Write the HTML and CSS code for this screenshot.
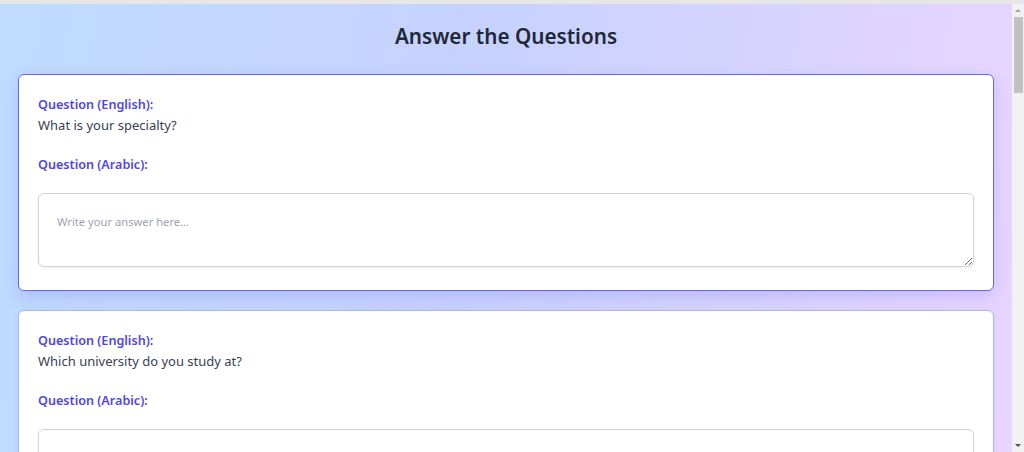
FILE: index.html
```html
<!DOCTYPE html>
<html lang="en">
<head>
    <meta charset="UTF-8" />
    <meta name="viewport" content="width=device-width, initial-scale=1.0" />
    <title>Answer the Questions</title>
    <link rel="stylesheet" href="styles.css">
</head>
<body>
    <div class="topbar"></div>
    <div class="window">
        <div class="page">
            <h1>Answer the Questions</h1>

            <div class="questions">
                <div class="question-card active">
                    <p class="label">Question (English):</p>
                    <p class="text">What is your specialty?</p>
                    <p class="label">Question (Arabic):</p>
                    <p class="text arabic" dir="rtl"></p>
                    <textarea placeholder="Write your answer here..."></textarea>
                </div>

                <div class="question-card">
                    <p class="label">Question (English):</p>
                    <p class="text">Which university do you study at?</p>
                    <p class="label">Question (Arabic):</p>
                    <p class="text arabic" dir="rtl"></p>
                    <textarea placeholder="Write your answer here..."></textarea>
                </div>

                <div class="question-card">
                    <p class="label">Question (English):</p>
                    <p class="text">What year are you in?</p>
                    <p class="label">Question (Arabic):</p>
                    <p class="text arabic" dir="rtl"></p>
                    <textarea placeholder="Write your answer here..."></textarea>
                </div>
            </div>
        </div>

        <div class="scrollbar">
            <div class="arrow up"></div>
            <div class="thumb"></div>
            <div class="track"></div>
            <div class="arrow down"></div>
        </div>
    </div>
</body>
</html>
```

FILE: styles.css
```css
html, body {
    margin: 0;
    height: 100%;
}
body {
    display: flex;
    flex-direction: column;
    overflow: hidden;
    font-family: 'Noto Sans', 'Open Sans', sans-serif;
    background: #fff;
}
.topbar {
    height: 4px;
    flex-shrink: 0;
    background: #e6e6e6;
}
.window {
    flex: 1;
    display: flex;
    min-height: 0;
}
.page {
    flex: 1;
    overflow: hidden;
    background: linear-gradient(100deg, #bfdbfe 0%, #c7d2fe 45%, #e9d5ff 100%);
    padding: 0 18px 40px;
}

/* fake scrollbar */
.scrollbar {
    width: 12px;
    flex-shrink: 0;
    display: flex;
    flex-direction: column;
    align-items: center;
    background: #f1f1f1;
}
.arrow {
    width: 0;
    height: 0;
    border-left: 3px solid transparent;
    border-right: 3px solid transparent;
}
.arrow.up {
    margin: 5px 0 5px;
    border-bottom: 3px solid #a3a3a3;
}
.arrow.down {
    margin: 5px 0 5px;
    border-top: 3px solid #505050;
}
.thumb {
    width: 9px;
    height: 76px;
    background: #c1c1c1;
}
.track {
    flex: 1;
}

h1 {
    margin: 0;
    padding: 16px 0 22px;
    font-size: 20.7px;
    font-weight: 600;
    line-height: 32px;
    color: #1f2937;
    text-align: center;
}
.questions {
    display: flex;
    flex-direction: column;
    gap: 19px;
}
.question-card {
    background: #fff;
    border: 1px solid #a5b4fc;
    border-radius: 6px;
    padding: 19px 19px 23px;
    box-shadow: 0 2px 6px rgba(99, 102, 241, 0.08);
}
.question-card.active {
    border-color: #6366f1;
    box-shadow: 0 6px 16px rgba(99, 102, 241, 0.22);
}
.label {
    margin: 0;
    font-size: 12.6px;
    line-height: 21px;
    font-weight: 600;
    color: #4f46e5;
}
.text {
    margin: 0 0 18px;
    font-size: 13px;
    line-height: 21px;
    color: #374151;
}
.text.arabic {
    margin: 0 0 18px;
}
textarea {
    display: block;
    box-sizing: border-box;
    width: 100%;
    height: 74px;
    padding: 19px 18px 17px;
    border: 1px solid #d1d5db;
    border-radius: 6px;
    box-shadow: 0 1px 3px rgba(0, 0, 0, 0.08);
    font-family: inherit;
    font-size: 11.2px;
    line-height: 18px;
    color: #374151;
    resize: vertical;
    outline: none;
}
textarea::placeholder {
    color: #9ca3af;
}
```
